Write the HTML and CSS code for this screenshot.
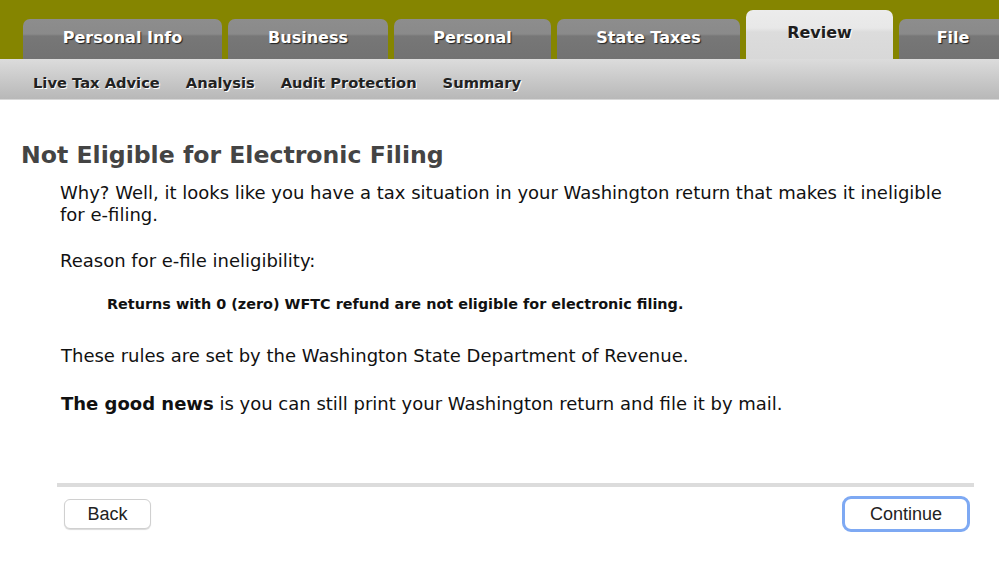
FILE: index.html
```html
<!DOCTYPE html>
<html>
<head>
<meta charset="utf-8">
<link rel="stylesheet" href="styles.css">
</head>
<body>
<div class="top">
  <div class="tabs">
    <div class="tab t1">Personal Info</div>
    <div class="tab t2">Business</div>
    <div class="tab t3">Personal</div>
    <div class="tab t4">State Taxes</div>
    <div class="tab t5 active">Review</div>
    <div class="tab t6">File</div>
  </div>
</div>
<div class="subnav">
  <span>Live Tax Advice</span>
  <span>Analysis</span>
  <span>Audit Protection</span>
  <span>Summary</span>
</div>
<div class="content">
  <h1>Not Eligible for Electronic Filing</h1>
  <div class="body">
    <p class="p1">Why? Well, it looks like you have a tax situation in your Washington return that makes it ineligible for e&#8209;filing.</p>
    <p class="p2">Reason for e&#8209;file ineligibility:</p>
    <p class="reason">Returns with 0 (zero) WFTC refund are not eligible for electronic filing.</p>
    <p class="p3">These rules are set by the Washington State Department of Revenue.</p>
    <p class="p4"><b>The good news</b> is you can still print your Washington return and file it by mail.</p>
  </div>
  <div class="footer">
    <button class="btn back">Back</button>
    <button class="btn cont">Continue</button>
  </div>
</div>
</body>
</html>
```
FILE: styles.css
```css
* { box-sizing: border-box; }
html, body { margin: 0; padding: 0; background: #fff; }
body { font-family: "DejaVu Sans", "Liberation Sans", sans-serif; width: 999px; height: 565px; overflow: hidden; }

.top { background: #858500; height: 59px; padding-left: 23px; overflow: hidden; }
.tabs { display: flex; gap: 6px; height: 59px; align-items: flex-end; }
.tab {
  height: 40px;
  border-radius: 7px 7px 0 0;
  background: linear-gradient(#8d8d8d 0, #8a8a8a 15px, #777 17px, #727272 100%);
  color: #fff;
  font-weight: bold;
  font-size: 16px;
  text-align: center;
  line-height: 37px;
  text-shadow: 1px 1px 1px #222;
  flex: none;
}
.t1 { width: 199px; }
.t2 { width: 160px; }
.t3 { width: 157px; }
.t4 { width: 183px; }
.t5 { width: 147px; }
.t6 { width: 108px; }
.tab.active {
  height: 49px;
  background: linear-gradient(#ececec 0, #e8e8e8 18px, #dcdcdc 22px, #d8d8d8 100%);
  color: #1e1e1e;
  text-shadow: 1px 1px 0 #fff;
  line-height: 46px;
}

.subnav {
  height: 41px;
  background: linear-gradient(#dcdcdc, #c6c6c6 60%, #b8b8b8);
  border-bottom: 1px solid #d8d8d8;
  display: flex;
  align-items: center;
  gap: 26px;
  padding: 6px 0 0 33px;
  font-weight: bold;
  font-size: 14.7px;
  color: #222;
  text-shadow: 1px 1px 0 #fff;
}

h1 { margin: 40px 0 0 21px; font-size: 23.6px; color: #444; font-weight: bold; line-height: 30px; }
.body { padding: 12px 40px 0 60px; font-size: 18px; color: #111; line-height: 22px; }
.body p { margin: 0; }
.p2 { margin-top: 24px !important; }
.reason { margin: 21px 0 0 47px !important; font-size: 14.4px; font-weight: bold; }
.p3 { margin: 30px 0 0 1px !important; }
.p4 { margin: 26px 0 0 1px !important; }

.footer {
  margin: 68px 25px 0 57px;
  border-top: 4px solid #dcdcdc;
  display: flex;
  justify-content: space-between;
  padding: 9px 4px 0 7px;
}
.btn {
  font-family: "Liberation Sans", sans-serif;
  font-size: 18px;
  color: #222;
  background: #fff;
  border: 1px solid #d0d0d0;
  border-radius: 6px;
  box-shadow: 0 1px 1px rgba(0,0,0,0.15);
  height: 30px;
  padding: 0;
}
.back { width: 87px; margin-top: 3px; }
.cont { width: 128px; height: 36px; border: 3px solid #7ea9f3; box-shadow: none; border-radius: 9px; }
```
